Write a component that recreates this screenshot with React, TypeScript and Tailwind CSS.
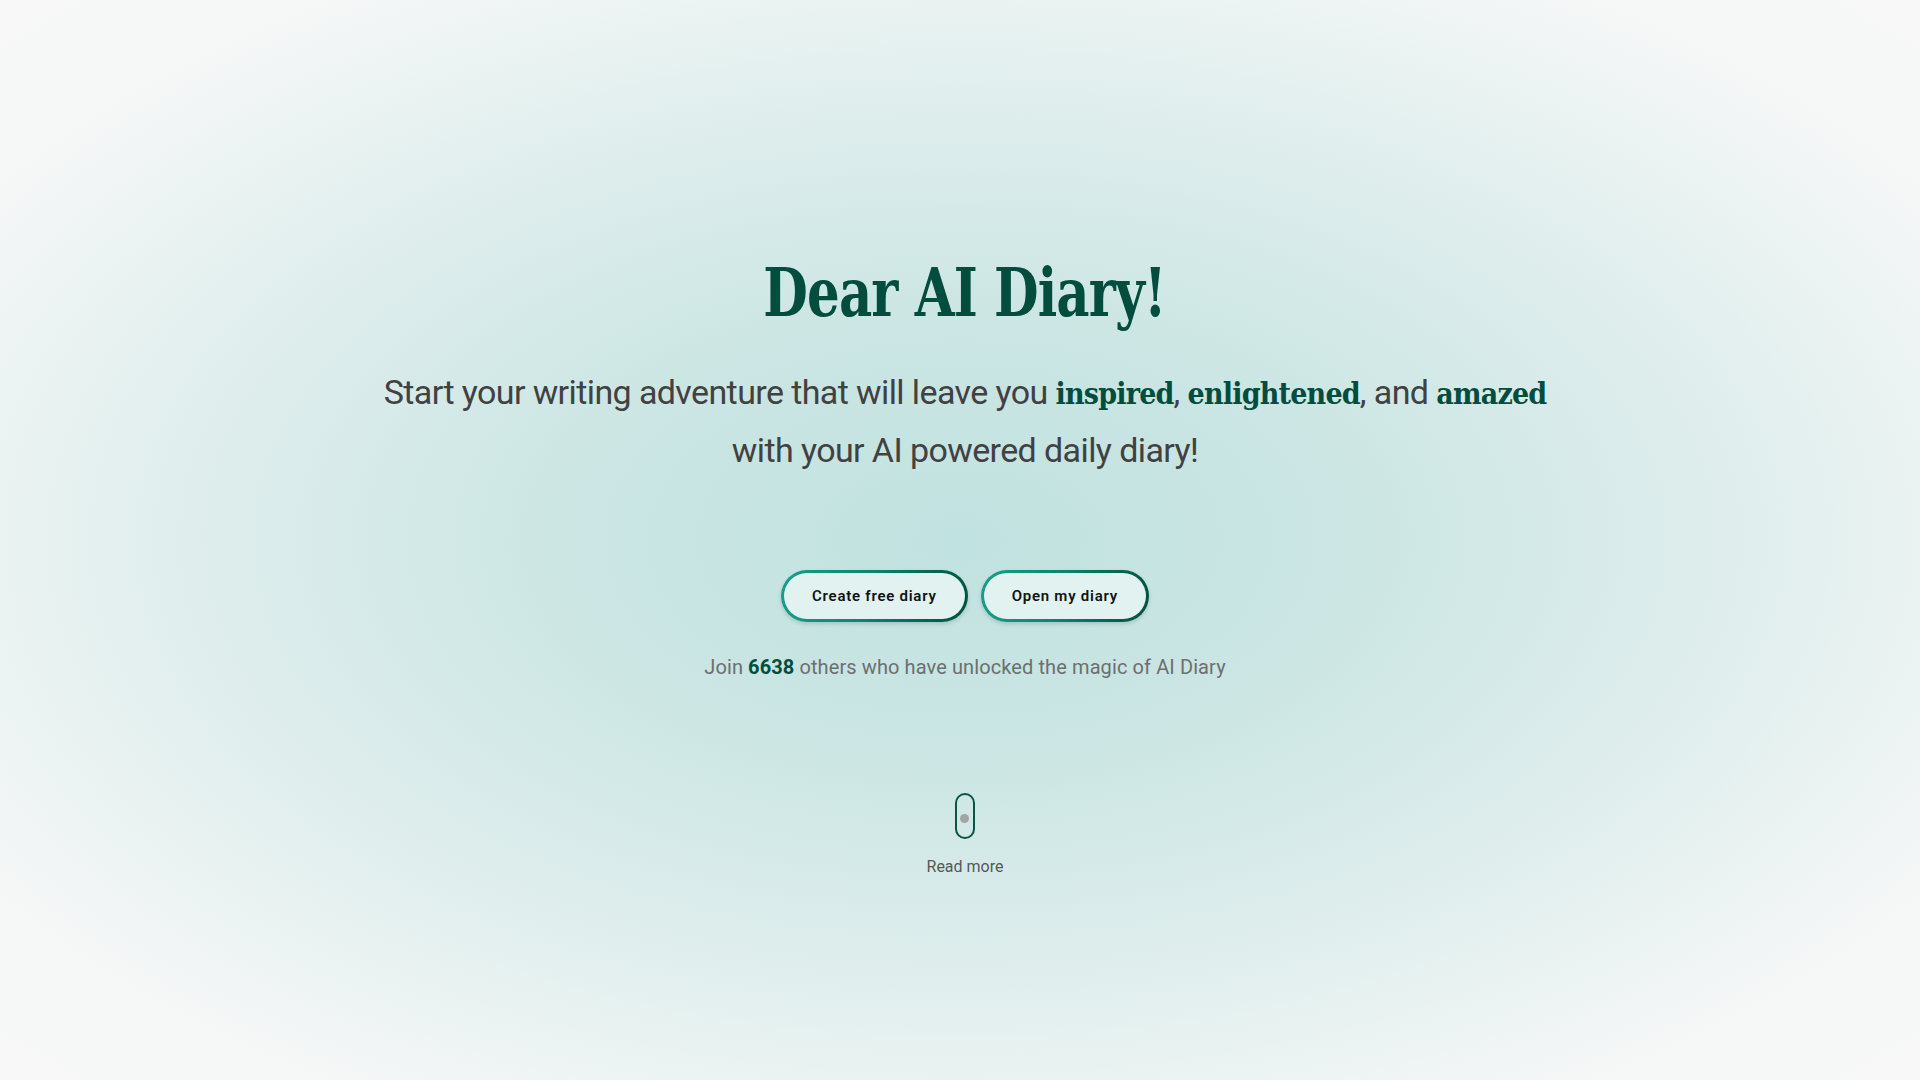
import React from "react";

const slab = { fontFamily: '"DejaVu Serif Condensed", "DejaVu Serif", serif' };

function PillButton({ children }: { children: React.ReactNode }) {
  return (
    <div className="rounded-full p-[3px] bg-[linear-gradient(100deg,#16a08a_0%,#0c8572_45%,#00503f_100%)] shadow-[0_2px_4px_rgba(0,0,0,0.15)]">
      <button className="h-[46px] px-[28px] rounded-full bg-[#e1f2f1] text-[15px] font-semibold tracking-[0.05em] text-[#121212]">
        {children}
      </button>
    </div>
  );
}

export default function App() {
  return (
    <div
      className="w-full min-h-screen flex flex-col items-center pl-[10px] bg-[radial-gradient(ellipse_at_50%_50%,#c0e2e0_0%,#cce6e4_30%,#e1efee_60%,#f6f7f7_85%,#f8f8f8_100%)]"
      style={{ fontFamily: 'Roboto, "Liberation Sans", sans-serif' }}
    >
      <h1
        className="mt-[258px] text-[68px] leading-[68px] font-bold text-[#034d3f] tracking-[-1px] scale-x-[0.84]"
        style={slab}
      >
        Dear AI Diary!
      </h1>
      <p className="mt-[38px] text-[34px] leading-[56px] tracking-[-0.6px] text-[#414141] text-center">
        Start your writing adventure that will leave you{" "}
        <b className="font-bold text-[30px] tracking-[-0.8px] text-[#034d3f]" style={slab}>inspired</b>,{" "}
        <b className="font-bold text-[30px] tracking-[-0.8px] text-[#034d3f]" style={slab}>enlightened</b>, and{" "}
        <b className="font-bold text-[30px] tracking-[-0.8px] text-[#034d3f]" style={slab}>amazed</b>
        <br />
        with your AI powered daily diary!
      </p>
      <div className="mt-[92px] flex gap-[13px]">
        <PillButton>Create free diary</PillButton>
        <PillButton>Open my diary</PillButton>
      </div>
      <p className="mt-[31px] text-[20px] leading-[28px] tracking-[0.1px] text-[#6c6f6f]">
        Join <b className="font-bold text-[#034d3f]">6638</b> others who have unlocked the magic of AI Diary
      </p>
      <div className="mt-[112px] flex flex-col items-center">
        <div className="w-[20px] h-[46px] rounded-full border-[2.5px] border-[#0a5446] flex items-center justify-center">
          <div className="w-[9px] h-[9px] rounded-full bg-[#a3a5a5] mt-[4px]" />
        </div>
        <span className="mt-[16px] text-[16px] leading-[24px] text-[#555858]">Read more</span>
      </div>
    </div>
  );
}
